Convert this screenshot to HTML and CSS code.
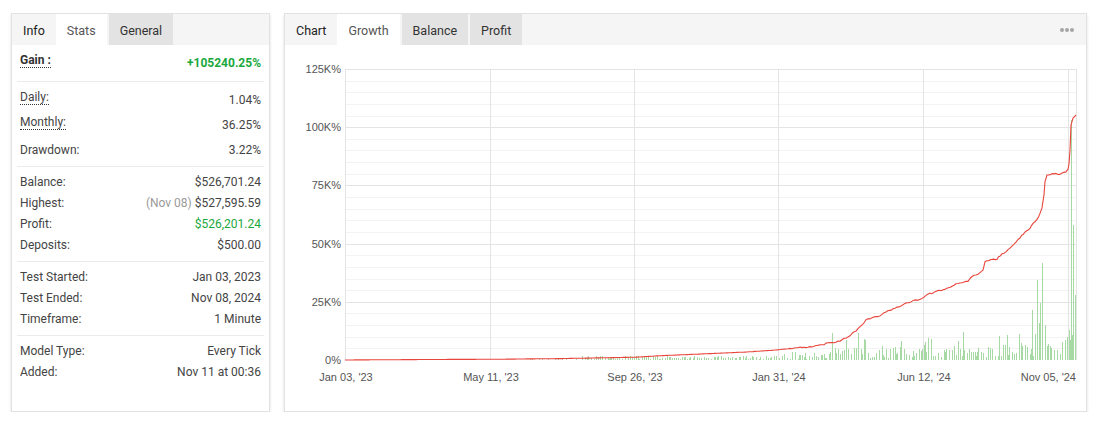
FILE: index.html
```html
<!DOCTYPE html>
<html lang="en">
<head>
    <meta charset="UTF-8">
    <title>Strategy Stats</title>
    <link rel="stylesheet" href="styles.css">
</head>
<body>
    <div class="panel stats-panel">
        <div class="tabs">
            <span class="tab tab-title">Info</span>
            <span class="tab active">Stats</span>
            <span class="tab">General</span>
        </div>
        <div class="stats-body">
            <div class="section first">
                <div class="row tall"><span class="hint strong">Gain :</span><span class="gain">+105240.25%</span></div>
            </div>
            <div class="section ratios">
                <div class="row tall"><span class="hint">Daily:</span><span>1.04%</span></div>
                <div class="row tall"><span class="hint">Monthly:</span><span>36.25%</span></div>
                <div class="row tall"><span>Drawdown:</span><span>3.22%</span></div>
            </div>
            <div class="section">
                <div class="row"><span>Balance:</span><span>$526,701.24</span></div>
                <div class="row"><span>Highest:</span><span><span class="muted">(Nov 08)</span> $527,595.59</span></div>
                <div class="row"><span>Profit:</span><span class="positive">$526,201.24</span></div>
                <div class="row"><span>Deposits:</span><span>$500.00</span></div>
            </div>
            <div class="section">
                <div class="row"><span>Test Started:</span><span>Jan 03, 2023</span></div>
                <div class="row"><span>Test Ended:</span><span>Nov 08, 2024</span></div>
                <div class="row"><span>Timeframe:</span><span>1 Minute</span></div>
            </div>
            <div class="section last">
                <div class="row"><span>Model Type:</span><span>Every Tick</span></div>
                <div class="row"><span>Added:</span><span>Nov 11 at 00:36</span></div>
            </div>
        </div>
    </div>

    <div class="panel chart-panel">
        <div class="tabs">
            <span class="tab tab-title">Chart</span>
            <span class="tab active">Growth</span>
            <span class="tab">Balance</span>
            <span class="tab">Profit</span>
            <span class="menu"><i></i><i></i><i></i></span>
        </div>
        <svg id="growthChart" class="chart" width="801" height="366"></svg>
    </div>

    <script>
        // Plot area inside the svg
        const NS = "http://www.w3.org/2000/svg";
        const plot = { left: 60, top: 24, right: 791, bottom: 315, max: 125 };
        const scale = (plot.bottom - plot.top) / plot.max; // px per 1K%

        // Growth curve: [x offset in px, gain in K%]
        const growth = [
            [0, 0], [75, 0.2], [146, 0.3], [215, 0.6], [290, 1.2], [318, 1.9], [368, 2.8],
            [400, 3.4], [428, 4.2], [445, 4.9], [467, 5.8], [495, 8.2], [503, 9.9],
            [511, 12.5], [517, 15.0], [521, 17.2], [529, 18.3], [535, 19.1], [541, 20.6],
            [550, 22.3], [560, 24.1], [570, 25.6], [577, 26.4], [581, 27.9], [590, 29.2],
            [600, 30.3], [607, 31.8], [615, 33.1], [623, 33.9], [627, 35.7], [635, 37.4],
            [638, 38.7], [640, 42.1], [645, 43.0], [652, 43.4], [655, 44.7], [663, 47.3],
            [669, 49.8], [675, 52.4], [680, 55.0], [685, 56.7], [688, 58.4], [692, 60.1],
            [695, 62.7], [697, 65.3], [699, 70.9], [700, 76.5], [702, 79.5], [707, 79.9],
            [715, 79.9], [721, 80.8], [723, 82.0], [724, 84.2], [725, 90.2], [726, 100.9],
            [728, 103.9], [731, 105.24]
        ];

        // Daily volume spikes that stand out
        const spikes = { 513: 27, 520: 20, 580: 18, 583: 22, 618: 28, 654: 24, 662: 25,
            687: 50, 692: 80, 694: 37, 695: 57, 697: 97, 700: 35, 705: 14,
            720: 20, 722: 23, 724: 30, 726: 240, 728: 135, 730: 65 };

        const ticks = [["Jan 03, '23", 1], ["May 11, '23", 146], ["Sep 26, '23", 290],
            ["Jan 31, '24", 434], ["Jun 12, '24", 579], ["Nov 05, '24", 724]];

        let seed = 11;
        function rand() {
            seed = (seed * 16807) % 2147483647;
            return seed / 2147483647;
        }

        function add(svg, tag, attrs, text) {
            const el = document.createElementNS(NS, tag);
            for (const k in attrs) el.setAttribute(k, attrs[k]);
            if (text) el.textContent = text;
            svg.appendChild(el);
            return el;
        }

        function drawChart() {
            const svg = document.getElementById("growthChart");
            const L = plot.left, R = plot.right;

            // horizontal grid, a heavier line every 25K
            for (let k = 5; k <= plot.max; k += 5) {
                const y = Math.round(plot.bottom - k * scale) + 0.5;
                add(svg, "line", { x1: L, x2: R, y1: y, y2: y,
                    class: k % 25 === 0 ? "grid-major" : "grid-minor" });
            }
            for (let k = 0; k <= plot.max; k += 25) {
                const y = plot.bottom - k * scale;
                add(svg, "text", { x: L - 4, y: y + 4, class: "axis-label", "text-anchor": "end" },
                    k === 0 ? "0%" : k + "K%");
            }

            // vertical grid at the date ticks, last label kept inside the plot
            ticks.forEach(([label, x], i) => {
                const px = L + x - 0.5;
                const lastTick = i === ticks.length - 1;
                add(svg, "line", { x1: px, x2: px, y1: plot.top, y2: plot.bottom, class: "grid-major" });
                add(svg, "text", { x: lastTick ? R : L + x, y: plot.bottom + 21, class: "axis-label",
                    "text-anchor": lastTick ? "end" : "middle" }, label);
            });
            add(svg, "line", { x1: L + 0.5, x2: L + 0.5, y1: plot.top, y2: plot.bottom, class: "grid-major" });
            add(svg, "line", { x1: R + 0.5, x2: R + 0.5, y1: plot.top, y2: plot.bottom, class: "grid-major" });

            // volume bars
            let d = "";
            for (let x = 185; x <= 731; x += 1 + Math.round(rand() * 2.2)) {
                if (spikes[x]) continue;
                let h;
                if (x < 235) h = rand() < 0.35 ? 1 : 0;
                else if (x < 435) h = 1 + rand() * 3;
                else if (x < 485) h = 1 + rand() * 7;
                else if (x < 655) h = 2 + rand() * 12 + (rand() < 0.18 ? rand() * 18 : 0);
                else h = 3 + rand() * 15 + (rand() < 0.2 ? rand() * 22 : 0);
                if (h < 1) continue;
                d += `M${L + x + 0.5} ${plot.bottom}v${-Math.round(h)}`;
            }
            for (const x in spikes) {
                d += `M${L + Number(x) + 0.5} ${plot.bottom}v${-spikes[x]}`;
            }
            add(svg, "path", { d: d, class: "bars" });

            // growth line, resampled with small wiggles
            const pts = [];
            for (let i = 0; i < growth.length - 1; i++) {
                const [x0, v0] = growth[i], [x1, v1] = growth[i + 1];
                const steps = Math.max(1, Math.round((x1 - x0) / 2));
                for (let s = 0; s < steps; s++) {
                    const t = s / steps;
                    const y = plot.bottom - (v0 + (v1 - v0) * t) * scale + (i > 8 && i < 50 ? (rand() - 0.5) * 1.4 : 0);
                    pts.push((L + x0 + (x1 - x0) * t).toFixed(1) + "," + y.toFixed(1));
                }
            }
            const last = growth[growth.length - 1];
            pts.push((L + last[0]) + "," + (plot.bottom - last[1] * scale).toFixed(1));
            add(svg, "polyline", { points: pts.join(" "), class: "growth-line" });
        }

        drawChart();
    </script>
</body>
</html>
```

FILE: styles.css
```css
body {
    margin: 0;
    padding: 13px 0 0 11px;
    background: #fff;
    font-family: Roboto, "Liberation Sans", Arial, sans-serif;
    font-size: 12px;
    color: #444;
    display: flex;
    gap: 14px;
    align-items: flex-start;
}

.panel {
    box-sizing: border-box;
    height: 399px;
    background: #fff;
    border: 1px solid #e2e2e2;
    box-shadow: 0 2px 3px rgba(0, 0, 0, 0.13);
}

.stats-panel {
    width: 259px;
}

.chart-panel {
    width: 803px;
}

.tabs {
    display: flex;
    height: 31px;
    background: #f5f5f5;
}

.tab {
    display: flex;
    align-items: center;
    padding: 2px 11px 0;
    margin-right: 2px;
    background: #e3e3e3;
    color: #333;
    font-size: 12.5px;
}

.tab-title {
    background: transparent;
    margin-right: 0;
    color: #222;
}

.tab.active {
    background: #fff;
    color: #555;
}

.menu {
    margin-left: auto;
    display: flex;
    align-items: center;
    gap: 1px;
    padding-right: 12px;
}

.menu i {
    width: 4px;
    height: 4px;
    border-radius: 50%;
    background: #a5a5a5;
}

.stats-body {
    padding: 0 5px;
}

.section {
    padding: 4px 3px 6px;
    border-bottom: 1px solid #ebebeb;
}

.section.first {
    padding: 5px 3px 6px;
}

.section.ratios {
    padding: 5px 3px 4px;
}

.section.last {
    border-bottom: none;
}

.row {
    display: flex;
    justify-content: space-between;
    align-items: center;
    height: 21px;
}

.row.tall {
    height: 25px;
}

.hint {
    border-bottom: 1px dotted #333;
    line-height: 13px;
    margin-bottom: 3px;
}

.strong {
    font-weight: bold;
    color: #333;
}

.gain {
    font-weight: bold;
    color: #1aa83c;
}

.positive {
    color: #1aa83c;
}

.muted {
    color: #9a9a9a;
}

.chart {
    display: block;
}

.grid-major {
    stroke: #e4e4e4;
    stroke-width: 1;
}

.grid-minor {
    stroke: #f3f3f3;
    stroke-width: 1;
}

.axis-label {
    font-family: "Liberation Sans", Arial, sans-serif;
    font-size: 11px;
    fill: #555;
}

.bars {
    stroke: #a6d9a4;
    stroke-width: 1;
    fill: none;
}

.growth-line {
    fill: none;
    stroke: #e8463c;
    stroke-width: 1.1;
    stroke-linejoin: round;
}
```
